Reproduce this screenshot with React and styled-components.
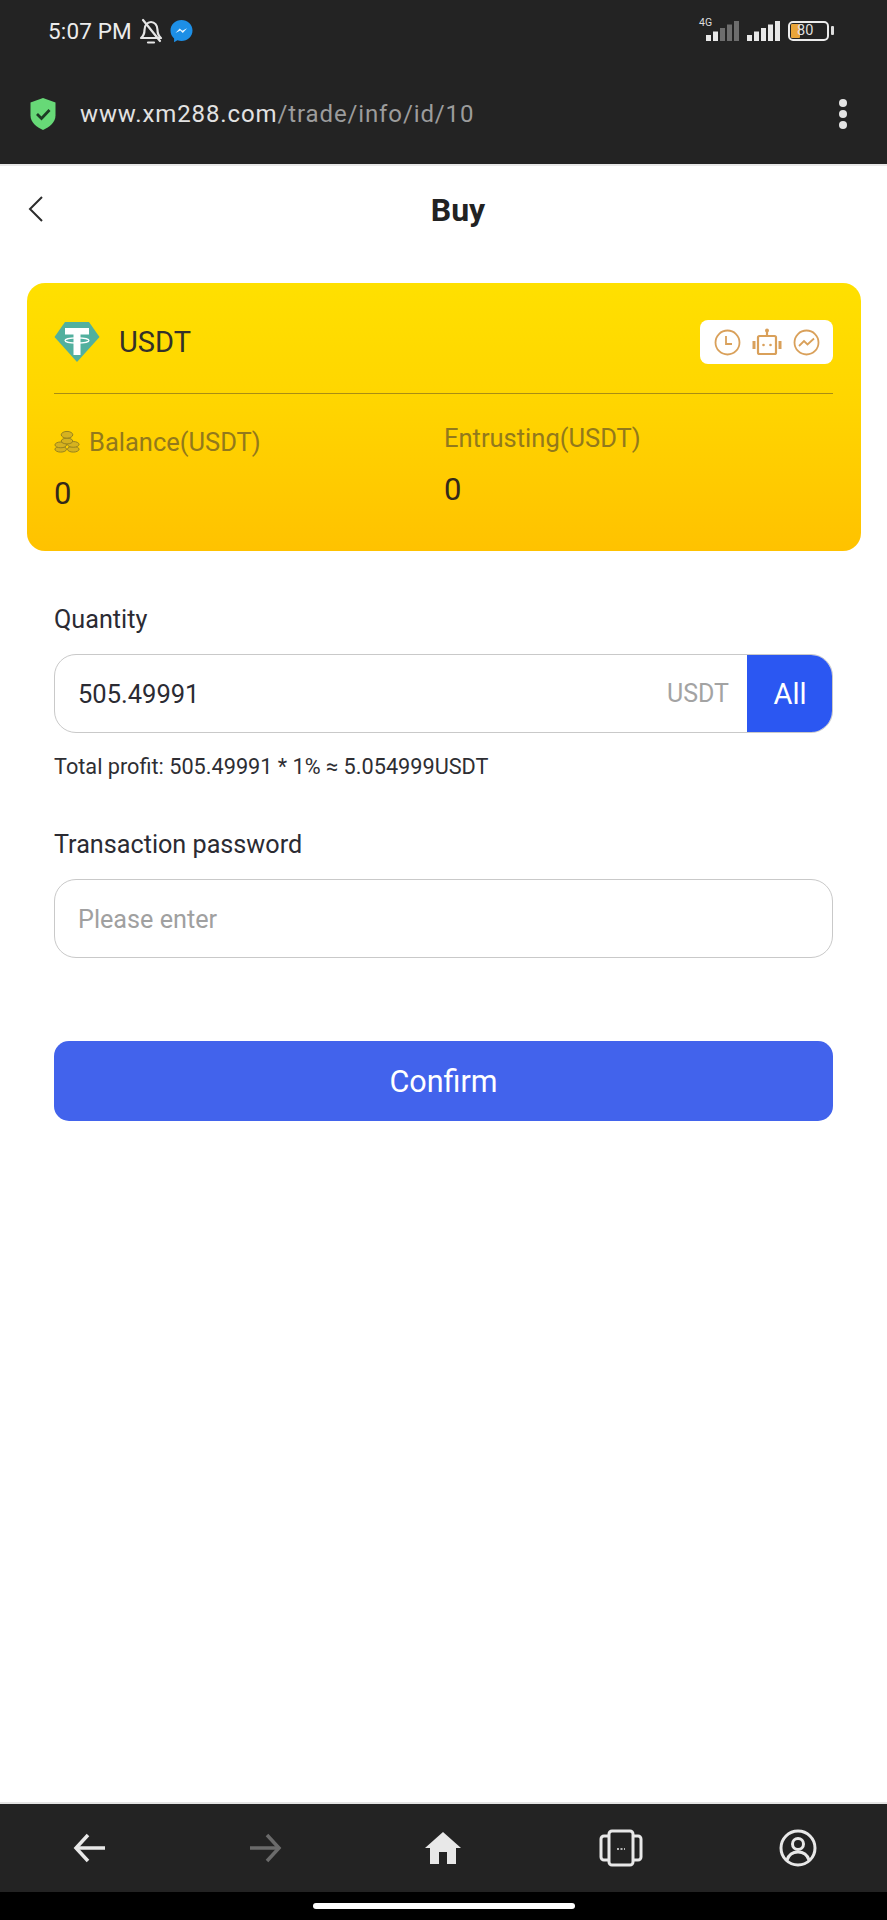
import React from "react";
import styled, { createGlobalStyle } from "styled-components";

const Global = createGlobalStyle`
  html, body { margin: 0; padding: 0; background: #fff; }
  * { box-sizing: border-box; }
  body { font-family: Roboto, "Liberation Sans", Arial, sans-serif; }
`;

const Screen = styled.div`
  width: 887px; height: 1920px; display: flex; flex-direction: column; background: #fff; overflow: hidden;
`;
const Chrome = styled.header`
  height: 166px; background: #232323; border-bottom: 2px solid #e8e8e8; display: flex; flex-direction: column;
`;
const StatusBar = styled.div`
  height: 62px; padding: 0 53px 0 48px; display: flex; align-items: center; justify-content: space-between; color: #ececec;
`;
const StatusGroup = styled.div`
  display: flex; align-items: center; gap: ${p => p.$gap || 0}px;
`;
const Time = styled.span`
  font-size: 22.5px; letter-spacing: 0.15px;
`;
const UrlBar = styled.div`
  flex: 1; padding: 1px 38px 0 30px; display: flex; align-items: center; color: #ddd;
`;
const Url = styled.div`
  flex: 1; margin-left: 24px; font-size: 24px; letter-spacing: 0.88px; color: #e2e2e2;
  span { color: #9c9c9c; }
`;
const Dots = styled.div`
  display: flex; flex-direction: column; gap: 3px; margin-right: 2px;
  i { display: block; width: 8px; height: 8px; border-radius: 50%; background: #e4e4e4; }
`;
const Main = styled.main`
  flex: 1; display: flex; flex-direction: column; color: #26262b;
`;
const TitleBar = styled.div`
  position: relative; height: 87px; display: flex; align-items: center; justify-content: center;
`;
const BackBtn = styled.div`
  position: absolute; left: 28px; top: 29px; display: flex;
`;
const Title = styled.h1`
  margin: 0 0 0 29px; font-size: 32px; font-weight: 700; color: #222;
`;
const Card = styled.section`
  margin: 30px 26px 0 27px; height: 268px; padding: 0 28px 0 27px; border-radius: 18px;
  background: linear-gradient(180deg, #ffe000 0%, #ffd500 45%, #ffc200 100%);
`;
const CardHead = styled.div`
  height: 111px; padding-top: 37px; border-bottom: 1px solid #a98d14; display: flex; justify-content: space-between; align-items: flex-start;
`;
const Coin = styled.div`
  display: flex; align-items: center; gap: 19px; font-size: 29px; color: #33302a; height: 44px;
`;
const IconPill = styled.div`
  width: 133px; height: 44px; background: #fff; border-radius: 8px; display: flex; align-items: center; justify-content: center; gap: 11px;
`;
const Stats = styled.div`
  display: grid; grid-template-columns: 390px 1fr;
`;
const Stat = styled.div`
  padding-top: ${p => p.$top}px;
`;
const StatLabel = styled.div`
  display: flex; align-items: center; gap: 9px; height: 30px; font-size: 25.5px; color: #92791c;
`;
const StatValue = styled.div`
  margin-top: 19px; font-size: 31px; line-height: 36px; color: #33291a;
`;
const Form = styled.form`
  padding: 0 54px; display: flex; flex-direction: column;
`;
const FieldLabel = styled.label`
  display: block; font-size: 25.2px; line-height: 29px; color: #2b2b33; margin-top: ${p => p.$top}px;
`;
const InputBox = styled.div`
  margin-top: 20px; height: 79px; border: 1.5px solid #c9c9c9; border-radius: 22px; display: flex; align-items: center; overflow: hidden;
`;
const TextInput = styled.input`
  flex: 1; min-width: 0; height: 100%; border: 0; outline: 0; background: transparent; padding: 0 0 0 23px;
  font: 25.5px Roboto, sans-serif; color: #2b2b33;
  &::placeholder { color: #a0a0a0; opacity: 1; font-size: 25.2px; }
`;
const Unit = styled.span`
  font-size: 25px; color: #a3a3a3; margin-right: 19px;
`;
const AllBtn = styled.button`
  width: 87px; height: 79px; margin: -1.5px; border: 0; background: #2b57f2; color: #fff; font: 29px Roboto, sans-serif;
`;
const Hint = styled.p`
  margin: 20px 0 0; font-size: 21.7px; line-height: 28px; color: #2e2e33;
`;
const Confirm = styled.button`
  margin-top: 83px; height: 80px; border: 0; border-radius: 15px; background: #4263ec; color: #fff; font: 30.5px Roboto, sans-serif;
`;
const BottomBar = styled.nav`
  height: 90px; background: #232323; border-top: 2px solid #e4e4e4; display: grid; grid-template-columns: repeat(5, 177.4px); align-items: center; justify-items: center;
`;
const HomeStrip = styled.div`
  height: 28px; background: #000; padding-top: 11px; display: flex; justify-content: center;
`;
const HomeHandle = styled.div`
  width: 262px; height: 6px; border-radius: 3px; background: #fff;
`;
const ArrowSvg = styled.svg`
  transform: ${p => (p.$flip ? "scaleX(-1)" : "none")};
`;

const BellOff = () => (
  <svg width="24" height="27" viewBox="0 0 24 27" fill="none" stroke="#e6e6e6" strokeWidth="2.200" strokeLinecap="round" strokeLinejoin="round">
    <path d="M2 20c2.500-2 3.500-4 3.500-8C5.500 7 8.500 4 12 4s6.500 3 6.500 8c0 4 1 6 3.500 8z" />
    <path d="M9 24.500h6" /><path d="M4 2l17 21" />
  </svg>
);
const Messenger = () => (
  <svg width="23" height="24" viewBox="0 0 23 24">
    <path d="M11.500 1C5.500 1 .5 5.500.5 11.500c0 3.200 1.300 6 3.600 8v3.700l3.300-1.900c1.300.4 2.600.7 4.100.7 6 0 11-4.500 11-10.500S17.500 1 11.500 1z" fill="#1d8fe6" />
    <path d="M5.500 14l4.200-4.600 2.600 2.400 4.800-2.600-4.300 4.700-2.500-2.400z" fill="#e8f6ff" />
  </svg>
);
const Bars = ({ dim, w }) => (
  <svg width={w} height="22" viewBox={`0 0 ${w} 22`}>
    {[0, 1, 2, 3, 4].map(i => (
      <rect key={i} x={w - 34 + i * 7} y={15 - i * 3.500} width="5" height={6 + i * 3.500} fill={dim && i > 1 ? "#6d6d6d" : "#e8e8e8"} />
    ))}
  </svg>
);
const Network = styled.div`
  position: relative; width: 44px; height: 22px;
  b { position: absolute; left: 3px; top: -4px; font: 400 10.500px Roboto, sans-serif; color: #ddd; }
`;
const Battery = styled.div`
  position: relative; width: 41px; height: 20px; border: 2.500px solid #ececec; border-radius: 5px; font-size: 14.500px; line-height: 15px; color: #dedede; padding-left: 7px; margin-right: 5px;
  &::before { content: ""; position: absolute; left: 1px; top: 1px; bottom: 1px; width: 9px; background: #e9a53a; border-radius: 1px; }
  &::after { content: ""; position: absolute; right: -7px; top: 3px; width: 3px; height: 9px; background: #ddd; border-radius: 1px; }
  span { position: relative; }
`;
const Shield = () => (
  <svg width="26" height="34" viewBox="0 0 26 34">
    <path d="M13 1l12.500 4.500v13c0 7-6 11.500-12.500 14.500C6.500 30 .5 25.500.5 18.500v-13z" fill="#67d977" />
    <path d="M7 17l4.500 4.500L19.500 13" fill="none" stroke="#1d3a24" strokeWidth="2.800" />
  </svg>
);
const Chevron = () => (
  <svg width="16" height="28" viewBox="0 0 16 28" fill="none" stroke="#2c2c2c" strokeWidth="2">
    <path d="M14 2L2 14l12 12" />
  </svg>
);
const Tether = () => (
  <svg width="46" height="42" viewBox="0 0 46 42">
    <path d="M11 1h24l10.500 15L23 41 .5 16z" fill="#52b09e" />
    <path d="M11 7h24v6.500h-8.500V34h-7V13.500H11z" fill="#fff" />
    <ellipse cx="23" cy="19.500" rx="12" ry="2.600" fill="none" stroke="#fff" strokeWidth="1.200" />
  </svg>
);
const tan = "#d9a05a";
const ClockIcon = () => (
  <svg width="27" height="27" viewBox="0 0 27 27" fill="none" stroke={tan} strokeWidth="1.800">
    <circle cx="13.500" cy="13.500" r="12" /><path d="M12 7v8h6" />
  </svg>
);
const RobotIcon = () => (
  <svg width="30" height="28" viewBox="0 0 30 28" fill="none" stroke={tan} strokeWidth="2.200">
    <rect x="6" y="8" width="18" height="18" rx="1.500" />
    <path d="M15 8V3" /><circle cx="15" cy="2.500" r="2" fill={tan} stroke="none" />
    <path d="M2 13v8M28 13v8" strokeWidth="3" />
    <circle cx="11.500" cy="17" r="1.300" fill={tan} stroke="none" /><circle cx="18.500" cy="17" r="1.300" fill={tan} stroke="none" />
  </svg>
);
const TrendIcon = () => (
  <svg width="27" height="27" viewBox="0 0 27 27" fill="none" stroke={tan} strokeWidth="1.800">
    <circle cx="13.500" cy="13.500" r="12" /><path d="M6 17l5-5 3.500 3.500L21 9.500" />
  </svg>
);
const Coins = () => (
  <svg width="26" height="24" viewBox="0 0 27 24" fill="#d6b21f" stroke="#94801f" strokeWidth="1">
    <ellipse cx="7" cy="19.500" rx="6" ry="3" /><ellipse cx="7" cy="15" rx="6" ry="3" />
    <ellipse cx="20" cy="19.500" rx="6" ry="3" /><ellipse cx="20" cy="14.500" rx="6" ry="3" />
    <ellipse cx="13.500" cy="11" rx="6" ry="3" /><ellipse cx="13.500" cy="4.500" rx="6" ry="3.500" />
  </svg>
);
const BackArrow = ({ color = "#e8e8e8", flip }) => (
  <ArrowSvg $flip={flip} width="32" height="30" viewBox="0 0 32 30" fill="none" stroke={color} strokeWidth="3.500">
    <path d="M15 2L3 15l12 13" /><path d="M3 15h29" />
  </ArrowSvg>
);
const HomeIcon = () => (
  <svg width="36" height="32" viewBox="0 0 36 32" fill="#e8e8e8">
    <path d="M18 0L0 16h5v16h9V20h8v12h9V16h5z" />
  </svg>
);
const TabsIcon = () => (
  <svg width="44" height="38" viewBox="0 0 44 38" fill="none" stroke="#e8e8e8" strokeWidth="3">
    <rect x="10" y="2" width="24" height="34" rx="3" />
    <path d="M10 7H5a3 3 0 0 0-3 3v18a3 3 0 0 0 3 3h5M34 7h5a3 3 0 0 1 3 3v18a3 3 0 0 1-3 3h-5" />
    <path d="M18 20h8" strokeDasharray="2 1.500" strokeWidth="1.500" />
  </svg>
);
const ProfileIcon = () => (
  <svg width="38" height="38" viewBox="0 0 38 38" fill="none" stroke="#e8e8e8" strokeWidth="3">
    <circle cx="19" cy="19" r="17" /><circle cx="19" cy="15" r="5.500" />
    <path d="M8 31c2-6 6-8 11-8s9 2 11 8" />
  </svg>
);

export default function App() {
  return (
    <Screen>
      <Global />
      <Chrome>
        <StatusBar>
          <StatusGroup $gap={7}>
            <Time>5:07 PM</Time>
            <BellOff />
            <Messenger />
          </StatusGroup>
          <StatusGroup $gap={7}>
            <Network><b>4G</b><Bars dim w={44} /></Network>
            <Bars w={34} />
            <Battery><span>80</span></Battery>
          </StatusGroup>
        </StatusBar>
        <UrlBar>
          <Shield />
          <Url>www.xm288.com<span>/trade/info/id/10</span></Url>
          <Dots><i /><i /><i /></Dots>
        </UrlBar>
      </Chrome>
      <Main>
        <TitleBar>
          <BackBtn><Chevron /></BackBtn>
          <Title>Buy</Title>
        </TitleBar>
        <Card>
          <CardHead>
            <Coin><Tether />USDT</Coin>
            <IconPill><ClockIcon /><RobotIcon /><TrendIcon /></IconPill>
          </CardHead>
          <Stats>
            <Stat $top={33}>
              <StatLabel><Coins />Balance(USDT)</StatLabel>
              <StatValue>0</StatValue>
            </Stat>
            <Stat $top={29}>
              <StatLabel>Entrusting(USDT)</StatLabel>
              <StatValue>0</StatValue>
            </Stat>
          </Stats>
        </Card>
        <Form>
          <FieldLabel $top={54}>Quantity</FieldLabel>
          <InputBox>
            <TextInput value="505.49991" readOnly />
            <Unit>USDT</Unit>
            <AllBtn type="button">All</AllBtn>
          </InputBox>
          <Hint>Total profit: 505.49991 * 1% ≈ 5.054999USDT</Hint>
          <FieldLabel $top={49}>Transaction password</FieldLabel>
          <InputBox>
            <TextInput placeholder="Please enter" readOnly />
          </InputBox>
          <Confirm type="button">Confirm</Confirm>
        </Form>
      </Main>
      <BottomBar>
        <BackArrow />
        <BackArrow color="#6b6b6b" flip />
        <HomeIcon />
        <TabsIcon />
        <ProfileIcon />
      </BottomBar>
      <HomeStrip><HomeHandle /></HomeStrip>
    </Screen>
  );
}
